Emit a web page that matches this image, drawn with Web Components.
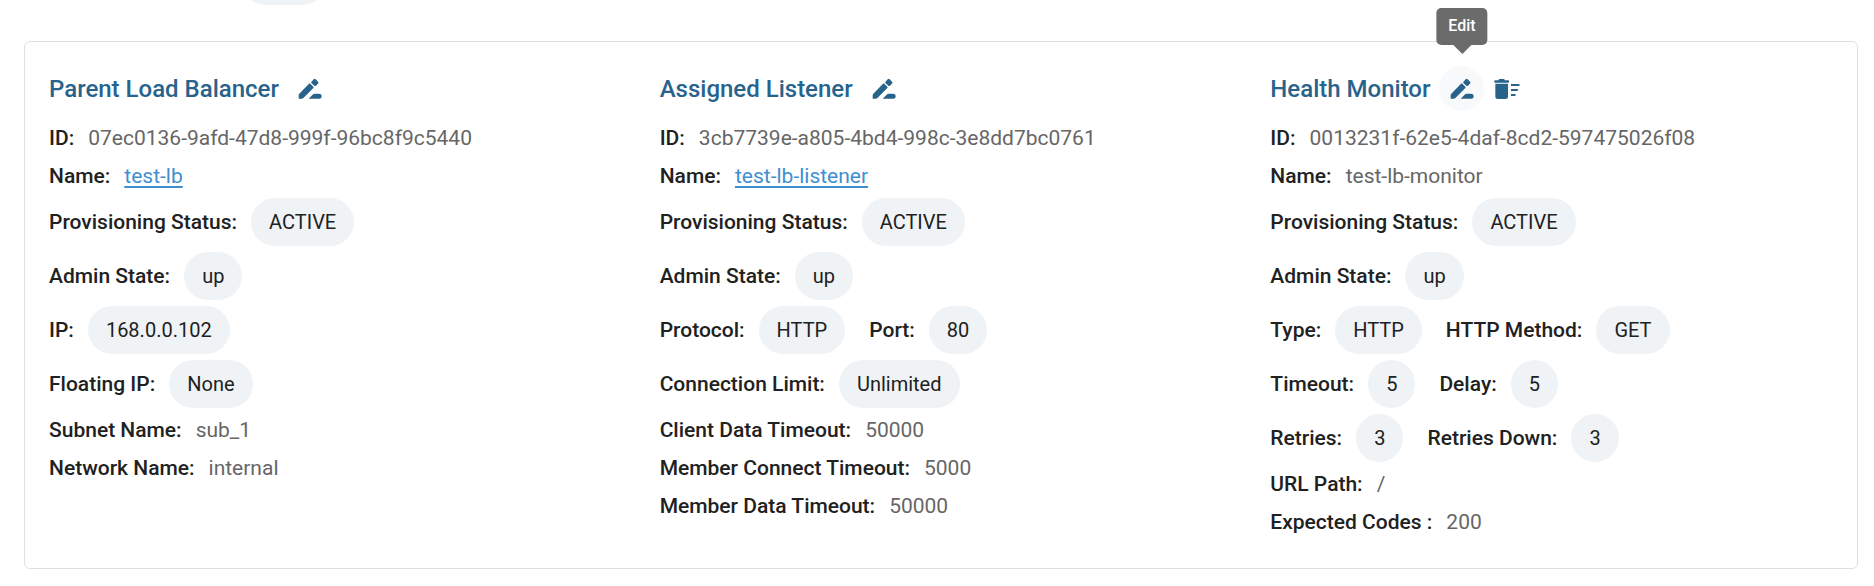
<!DOCTYPE html>
<html lang="en">
<head>
<meta charset="utf-8">
<title>Load balancer pool</title>
<style>
  body { margin: 0; background: #fff; color: #212121; font: 400 21px/28px Roboto, sans-serif; }
</style>
</head>
<body>
<pool-page></pool-page>
<script>
  const define = (name, css, html) => customElements.define(name, class extends HTMLElement {
    constructor() {
      super();
      this.attachShadow({ mode: 'open' }).innerHTML = `<style>${css}</style>${html}`;
    }
  });

  // Rounded value chip
  define('value-chip', `
    :host { display: inline-block; box-sizing: border-box; min-height: 48px; padding: 10px 18px;
      border-radius: 24px; background: #eff3f6; color: #212121; font-size: 20px; line-height: 28px; white-space: nowrap; }
  `, `<slot></slot>`);

  // Label followed by its value
  define('info-field', `
    :host { display: flex; align-items: center; gap: 14px; white-space: nowrap; color: #666; }
    b { font-weight: 500; color: #212121; }
    ::slotted(a) { color: #3f8fcf; text-decoration: underline; text-underline-offset: 3px; text-decoration-thickness: 2px; }
  `, `<b><slot name="label"></slot></b><slot></slot>`);

  define('field-row', `
    :host { display: flex; flex-wrap: wrap; column-gap: 24px; }
  `, `<slot></slot>`);

  // Stack of rows; the "chips" variant has tighter gaps
  define('field-group', `
    :host { display: flex; flex-direction: column; gap: 10px; }
    :host([chips]) { gap: 6px; }
  `, `<slot></slot>`);

  const icons = {
    edit: `<svg viewBox="0 0 72 72" width="24" height="24" aria-hidden="true"><path d="M2 65V54Q2 52 4 50L33 20Q35 18 37 20L46 29Q48 31 46 33L17 62Q14 65 11 65ZM40 15L47 7Q50 4 53 7L60 14Q63 17 60 20L53 27Q51 28 49 26L40 18Q39 17 40 15ZM32 65L44 53Q47 50 50 50H63Q71 50 71 57.500Q71 65 63 65Z"/></svg>`,
    remove: `<svg viewBox="0 0 78 72" width="26" height="24" aria-hidden="true"><path d="M14 10V8Q14 6 17 6H28Q32 6 32 8V10H43Q45 10 45 12V15Q45 17 43 17H3Q1 17 1 15V12Q1 10 3 10ZM4 20H42V59Q42 66 35 66H11Q4 66 4 59ZM51 21H75Q77 21 77 24Q77 27 75 27H51ZM51 36H70Q72 36 72 39Q72 42 70 42H51ZM51 51H63Q65 51 65 54Q65 57 63 57H51Z"/></svg>`
  };

  // Round icon button with an optional tooltip
  customElements.define('icon-button', class extends HTMLElement {
    constructor() {
      super();
      const tip = this.getAttribute('tooltip');
      const label = this.getAttribute('label');
      this.attachShadow({ mode: 'open' }).innerHTML = `<style>
        :host { display: block; position: relative; }
        button { display: grid; place-items: center; width: 45px; height: 45px; padding: 0; border: 0;
          border-radius: 50%; background: transparent; color: #28638c; cursor: pointer; }
        :host([tooltip]) button { background: #f7f9fb; }
        svg { fill: currentColor; }
        .tip { position: absolute; left: 50%; bottom: calc(100% + 21px); transform: translateX(-50%);
          box-sizing: border-box; padding: 7px 12px 9px; border-radius: 5px; background: #6b6b6b; color: #fff;
          font-size: 16px; line-height: 21px; font-weight: 500; }
        .tip::after { content: ""; position: absolute; top: 100%; left: 50%; margin-left: -9px;
          border: 9px solid transparent; border-top-color: #6b6b6b; border-bottom: 0; }
      </style><button type="button" aria-label="${label}">${icons[this.getAttribute('icon')]}</button>${tip ? `<span class="tip" role="tooltip">${tip}</span>` : ''}`;
    }
  });

  define('info-section', `
    :host { display: flex; flex-direction: column; gap: 8px; padding: 24px 0 32px 24px; }
    header { display: flex; align-items: center; min-height: 45px; margin-bottom: 5px; }
    h2 { margin: 0 9px 0 0; font-size: 24px; line-height: 32px; font-weight: 500; color: #28638c; white-space: nowrap; }
  `, `<header><h2><slot name="title"></slot></h2><slot name="actions"></slot></header><slot></slot>`);

  define('info-card', `
    :host { display: grid; grid-template-columns: repeat(3, minmax(0, 1fr)); border: 1px solid #e0e0e0; border-radius: 6px; }
  `, `<slot></slot>`);

  // Tail of the row that is scrolled out above the card
  define('scrolled-row', `
    :host { display: flex; align-items: flex-end; height: 5px; padding-left: 218px; overflow: hidden; }
    i { flex: none; width: 84px; height: 48px; border-radius: 24px; background: #eff3f6; }
  `, `<i></i>`);

  const text = (label, value) => `<info-field><span slot="label">${label}</span><span>${value}</span></info-field>`;
  const link = (label, value) => `<info-field><span slot="label">${label}</span><a href="#${value}">${value}</a></info-field>`;
  const chip = (label, value) => `<info-field><span slot="label">${label}</span><value-chip>${value}</value-chip></info-field>`;
  const row = (...chips) => `<field-row>${chips.join('')}</field-row>`;
  const group = (...rows) => `<field-group>${rows.join('')}</field-group>`;
  const chipGroup = (...rows) => `<field-group chips>${rows.join('')}</field-group>`;

  define('pool-page', `
    :host { display: flex; flex-direction: column; gap: 36px; padding: 0 16px 16px 24px; }
  `, `
    <scrolled-row></scrolled-row>
    <info-card>
      <info-section>
        <span slot="title">Parent Load Balancer</span>
        <icon-button slot="actions" icon="edit" label="Edit load balancer"></icon-button>
        ${group(text('ID:', '07ec0136-9afd-47d8-999f-96bc8f9c5440'), link('Name:', 'test-lb'))}
        ${chipGroup(chip('Provisioning Status:', 'ACTIVE'), chip('Admin State:', 'up'), chip('IP:', '168.0.0.102'), chip('Floating IP:', 'None'))}
        ${group(text('Subnet Name:', 'sub_1'), text('Network Name:', 'internal'))}
      </info-section>
      <info-section>
        <span slot="title">Assigned Listener</span>
        <icon-button slot="actions" icon="edit" label="Edit listener"></icon-button>
        ${group(text('ID:', '3cb7739e-a805-4bd4-998c-3e8dd7bc0761'), link('Name:', 'test-lb-listener'))}
        ${chipGroup(chip('Provisioning Status:', 'ACTIVE'), chip('Admin State:', 'up'), row(chip('Protocol:', 'HTTP'), chip('Port:', '80')), chip('Connection Limit:', 'Unlimited'))}
        ${group(text('Client Data Timeout:', '50000'), text('Member Connect Timeout:', '5000'), text('Member Data Timeout:', '50000'))}
      </info-section>
      <info-section>
        <span slot="title">Health Monitor</span>
        <icon-button slot="actions" icon="edit" label="Edit health monitor" tooltip="Edit"></icon-button>
        <icon-button slot="actions" icon="remove" label="Delete health monitor"></icon-button>
        ${group(text('ID:', '0013231f-62e5-4daf-8cd2-597475026f08'), text('Name:', 'test-lb-monitor'))}
        ${chipGroup(chip('Provisioning Status:', 'ACTIVE'), chip('Admin State:', 'up'), row(chip('Type:', 'HTTP'), chip('HTTP Method:', 'GET')), row(chip('Timeout:', '5'), chip('Delay:', '5')), row(chip('Retries:', '3'), chip('Retries Down:', '3')))}
        ${group(text('URL Path:', '/'), text('Expected Codes :', '200'))}
      </info-section>
    </info-card>
  `);
</script>
</body>
</html>
